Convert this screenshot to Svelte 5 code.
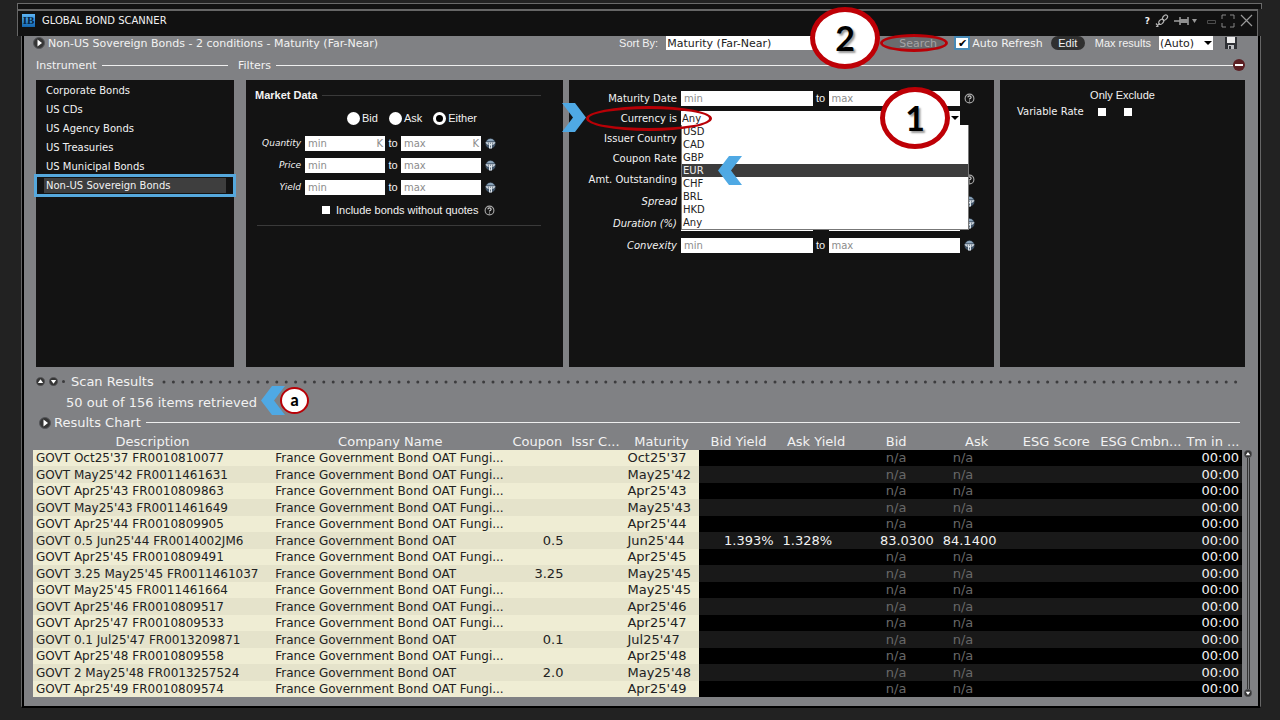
<script lang="ts">
  const instruments = [
    'Corporate Bonds',
    'US CDs',
    'US Agency Bonds',
    'US Treasuries',
    'US Municipal Bonds',
    'Non-US Sovereign Bonds',
  ];
  let instrument = $state('Non-US Sovereign Bonds');

  let side = $state('Either');
  const marketFields = [
    { label: 'Quantity', unit: 'K' },
    { label: 'Price', unit: '' },
    { label: 'Yield', unit: '' },
  ];

  const bondFields = [
    { label: 'Maturity Date', kind: 'range', icon: 'help' },
    { label: 'Currency is', kind: 'currency', icon: '' },
    { label: 'Issuer Country', kind: 'range', icon: '' },
    { label: 'Coupon Rate', kind: 'range', icon: '' },
    { label: 'Amt. Outstanding', kind: 'range', icon: 'help' },
    { label: 'Spread', kind: 'range', icon: 'globe', italic: true },
    { label: 'Duration (%)', kind: 'range', icon: 'globe', italic: true },
    { label: 'Convexity', kind: 'range', icon: 'globe', italic: true },
  ];

  const currencies = ['USD', 'CAD', 'GBP', 'EUR', 'CHF', 'BRL', 'HKD', 'Any'];
  let currency = $state('Any');
  let highlighted = $state('EUR');

  const columns = ['Description', 'Company Name', 'Coupon', 'Issr C...', 'Maturity', 'Bid Yield', 'Ask Yield', 'Bid', 'Ask', 'ESG Score', 'ESG Cmbn...', 'Tm in ...'];
  const widths = [239, 236, 58, 58, 74, 80, 75, 85, 76, 83, 86, 58];

  const long = 'France Government Bond OAT Fungi...';
  const short = 'France Government Bond OAT';
  const bonds = [
    { id: 'FR0010810077', company: long, coupon: '', maturity: "Oct25'37" },
    { id: 'FR0011461631', company: long, coupon: '', maturity: "May25'42" },
    { id: 'FR0010809863', company: long, coupon: '', maturity: "Apr25'43" },
    { id: 'FR0011461649', company: long, coupon: '', maturity: "May25'43" },
    { id: 'FR0010809905', company: long, coupon: '', maturity: "Apr25'44" },
    { id: 'FR0014002JM6', company: short, coupon: '0.5', maturity: "Jun25'44", bidYield: '1.393%', askYield: '1.328%', bid: '83.0300', ask: '84.1400' },
    { id: 'FR0010809491', company: long, coupon: '', maturity: "Apr25'45" },
    { id: 'FR0011461037', company: short, coupon: '3.25', maturity: "May25'45" },
    { id: 'FR0011461664', company: long, coupon: '', maturity: "May25'45" },
    { id: 'FR0010809517', company: long, coupon: '', maturity: "Apr25'46" },
    { id: 'FR0010809533', company: long, coupon: '', maturity: "Apr25'47" },
    { id: 'FR0013209871', company: short, coupon: '0.1', maturity: "Jul25'47" },
    { id: 'FR0010809558', company: long, coupon: '', maturity: "Apr25'48" },
    { id: 'FR0013257524', company: short, coupon: '2.0', maturity: "May25'48" },
    { id: 'FR0010809574', company: long, coupon: '', maturity: "Apr25'49" },
  ];

  function describe(bond: { id: string; coupon: string; maturity: string }) {
    const rate = bond.coupon === '2.0' ? '2' : bond.coupon;
    return ['GOVT', rate, bond.maturity, bond.id].filter(Boolean).join(' ');
  }
</script>

{#snippet globe()}
  <svg class="mark" viewBox="0 0 11 11" aria-hidden="true">
    <circle cx="5.500" cy="5.500" r="5" fill="#43566a" />
    <path d="M1.500 3.200Q5.500-1.500 9.500 3.200Z" fill="#8ba3b8" />
    <path d="M.4 4.200h10.200L8.800 6.400H7v4H4v-4H2.200Z" fill="#dde4ea" />
    <path d="M2.800 5.200h1.200M5 5.200h1M7 5.200h1.200M5.500 7.500v2" stroke="#3a4a5a" stroke-width=".8" />
  </svg>
{/snippet}

{#snippet help()}
  <svg class="mark" viewBox="0 0 10 10" aria-hidden="true">
    <circle cx="5" cy="5" r="4" fill="none" stroke="#aaa" />
    <path d="M3.500 4Q3.600 2.600 5 2.600T6.500 4Q6.400 4.800 5 5.500V6M5 6.800v.9" fill="none" stroke="#ccc" />
  </svg>
{/snippet}

{#snippet disc(d: string)}
  <svg class="disc" viewBox="0 0 12 12" aria-hidden="true">
    <circle cx="6" cy="6" r="5.500" fill="#353535" stroke="#55565a" />
    <path {d} fill="#fff" />
  </svg>
{/snippet}

{#snippet chevron(d: string)}
  <svg viewBox="0 0 24 29" width="24" height="29" aria-hidden="true"><path {d} fill="#4fa9e4" /></svg>
{/snippet}

<main class="desktop">
  <div class="back-window"></div>

  <header class="titlebar">
    <span class="logo">IB</span>
    <h1>GLOBAL BOND SCANNER</h1>
    <button class="help-btn" aria-label="Help">?</button>
    <button aria-label="Link">
      <svg width="14" height="14" viewBox="0 0 14 14" fill="none" stroke="#b4b4b4" stroke-width="1.200">
        <ellipse cx="10" cy="3.600" rx="3" ry="2" transform="rotate(-48 10 3.600)" />
        <ellipse cx="6.200" cy="7.800" rx="3" ry="2" transform="rotate(-48 6.200 7.800)" />
        <path d="M5 9.500 1 12.500M1 9.500 3.500 12.500" />
      </svg>
    </button>
    <button class="pin" aria-label="Pin">
      <svg width="24" height="12" viewBox="0 0 24 12">
        <path d="M0 6h6M6 2v8M8 4v4M14 2v8" stroke="#a0a0a0" stroke-width="1.500" fill="none" />
        <path d="M6 4h8v4H6Z" fill="#909090" />
        <path d="M18 4h5l-2.500 4Z" fill="#999" />
      </svg>
    </button>
    <button aria-label="Minimize">
      <svg width="9" height="12" viewBox="0 0 9 12"><path d="M.5 5.500h8v3h-8Z" fill="none" stroke="#4c4c4c" /></svg>
    </button>
    <button aria-label="Maximize">
      <svg width="14" height="14" viewBox="0 0 14 14"><path d="M1 5V1h4M9 1h4v4M13 9v4H9M5 13H1V9" fill="none" stroke="#888" /></svg>
    </button>
    <button aria-label="Close">
      <svg width="13" height="13" viewBox="0 0 13 13"><path d="M1 1 12 12M12 1 1 12" stroke="#999" stroke-width="1.200" /></svg>
    </button>
  </header>

  <div class="window">
    <div class="toolbar">
      <button aria-label="Expand scan">{@render disc('M4.500 2.500v7L9 6Z')}</button>
      <span class="summary">Non-US Sovereign Bonds - 2 conditions - Maturity (Far-Near)</span>
      <label class="arial" for="sort">Sort By:</label>
      <span class="picker sort">
        <select id="sort"><option>Maturity (Far-Near)</option></select>
      </span>
      <span class="search-wrap">
        <button class="search">Search</button>
        <span class="ring search-ring"></span>
        <span class="badge badge-two">2</span>
      </span>
      <label class="auto"><input type="checkbox" checked />Auto Refresh</label>
      <button class="edit">Edit</button>
      <label class="arial max" for="max">Max results</label>
      <span class="picker max-pick">
        <select id="max"><option>(Auto)</option></select>
      </span>
      <button class="save" aria-label="Save">
        <svg width="14" height="14" viewBox="0 0 14 14">
          <path d="M1 1h12v12H1Z" fill="#303236" />
          <path d="M3 1h8v6H3Z" fill="#eee" />
          <path d="M4 9h6v4H4Z" fill="#bfc1c4" />
          <path d="M5 10h2v3H5Z" fill="#303236" />
        </svg>
      </button>
    </div>

    <div class="heads">
      <h2 class="rule-head inst-head">Instrument</h2>
      <h2 class="rule-head filter-head">Filters</h2>
      <button class="collapse" aria-label="Collapse filters">
        <svg width="12" height="12" viewBox="0 0 12 12">
          <circle cx="6" cy="6" r="6" fill="#5c2024" /><path d="M2 6h8" stroke="#fff" stroke-width="2" />
        </svg>
      </button>
    </div>

    <div class="panels">
      <div class="panel list">
        {#each instruments as name}
          <button class:selected={name === instrument} onclick={() => (instrument = name)}>
            <span>{name}</span>
          </button>
        {/each}
      </div>

      <section class="panel market">
        <h3>Market Data</h3>
        <div class="sides">
          {#each ['Bid', 'Ask', 'Either'] as option}
            <label><input type="radio" name="side" value={option} bind:group={side} />{option}</label>
          {/each}
        </div>
        {#each marketFields as field}
          <div class="field">
            <label for={field.label}>{field.label}</label>
            <div class="range">
              <span class="box"><input id={field.label} placeholder="min" />{#if field.unit}<i>{field.unit}</i>{/if}</span>
              <span class="to">to</span>
              <span class="box"><input aria-label="{field.label} max" placeholder="max" />{#if field.unit}<i>{field.unit}</i>{/if}</span>
            </div>
            {@render globe()}
          </div>
        {/each}
        <div class="quotes">
          <label><input type="checkbox" />Include bonds without quotes</label>
          {@render help()}
        </div>
        <hr />
      </section>

      <section class="panel bond">
        {#each bondFields as field, i}
          <div class="field">
            <label class:italic={field.italic} for="bond-{i}">{field.label}</label>
            {#if field.kind === 'currency'}
              <div class="currency">
                <span class="picker">
                  <select id="bond-{i}" bind:value={currency}>
                    {#each currencies as code}<option>{code}</option>{/each}
                  </select>
                </span>
                <div class="menu">
                  {#each currencies as code}
                    <button
                      class:active={code === highlighted}
                      onmouseenter={() => (highlighted = code)}
                      onclick={() => (currency = code)}
                    >{code}</button>
                  {/each}
                  <span class="pointer menu-pointer">{@render chevron('M24 0H11L0 14.500 11 29H24L13 14.500Z')}</span>
                </div>
                <span class="pointer field-pointer">{@render chevron('M0 0H13L24 14.500 13 29H0L11 14.500Z')}</span>
                <span class="ring currency-ring"></span>
                <span class="badge badge-one">1</span>
              </div>
            {:else}
              <div class="range">
                <span class="box"><input id="bond-{i}" placeholder="min" /></span>
                <span class="to">to</span>
                <span class="box"><input aria-label="{field.label} max" placeholder="max" /></span>
              </div>
            {/if}
            {#if field.icon === 'help'}{@render help()}{:else if field.icon === 'globe'}{@render globe()}{/if}
          </div>
        {/each}
      </section>

      <section class="panel exclude">
        <h3>Only Exclude</h3>
        <div class="exclude-row">
          <span>Variable Rate</span>
          <input type="checkbox" aria-label="Only variable rate" />
          <input type="checkbox" aria-label="Exclude variable rate" />
        </div>
      </section>
    </div>

    <div class="divider">
      <button aria-label="Move up">{@render disc('M2.500 8h7L6 3Z')}</button>
      <button aria-label="Move down">{@render disc('M2.500 4h7L6 9Z')}</button>
      <span class="dot"></span>
      <h2>Scan Results</h2>
      <svg class="dots" height="4" aria-hidden="true">
        <line x1="2" y1="2" x2="100%" y2="2" stroke="#3c3c3e" stroke-width="3" stroke-linecap="round" stroke-dasharray="0 9.400" />
      </svg>
    </div>

    <div class="count">
      <span class="retrieved">50 out of 156 items retrieved</span>
      <span class="callout">{@render chevron('M24 0H11L0 14.500 11 29H24L13 14.500Z')}<span class="note">a</span></span>
    </div>

    <div class="chart">
      <button aria-label="Expand chart">{@render disc('M4.500 2.500v7L9 6Z')}</button>
      <h2 class="rule-head">Results Chart</h2>
    </div>

    <div class="results">
      <table>
        <colgroup>
          {#each widths as w}<col style="width: {(w / 1208) * 100}%" />{/each}
        </colgroup>
        <thead>
          <tr>{#each columns as name}<th>{name}</th>{/each}</tr>
        </thead>
        <tbody>
          {#each bonds as bond}
            <tr>
              <td class="info small">{describe(bond)}</td>
              <td class="info small">{bond.company}</td>
              <td class="info num">{bond.coupon}</td>
              <td class="info"></td>
              <td class="info">{bond.maturity}</td>
              <td class="num yield">{bond.bidYield ?? ''}</td>
              <td class="ask-yield">{bond.askYield ?? ''}</td>
              <td class={bond.bid ? 'num yield' : 'na'}>{bond.bid ?? 'n/a'}</td>
              <td class={bond.ask ? 'ask-yield' : 'na na-ask'}>{bond.ask ?? 'n/a'}</td>
              <td></td>
              <td></td>
              <td class="num">00:00</td>
            </tr>
          {/each}
        </tbody>
      </table>
      <div class="scroll">
        <button aria-label="Scroll up">{@render disc('M2.500 8h7L6 3Z')}</button>
        <span class="track"></span>
        <button aria-label="Scroll down">{@render disc('M2.500 4h7L6 9Z')}</button>
      </div>
    </div>
  </div>
</main>

<style>
  :global(body) {
    background: #222;
  }

  .desktop {
    box-sizing: border-box;
    min-height: 100vh;
    padding: 3px 18px 12px 17px;
    background: #222;
    color: #f2f2f2;
    font-family: "DejaVu Sans", Verdana, sans-serif;
    font-size: 10px;
  }

  .desktop * {
    box-sizing: border-box;
  }

  h1, h2, h3 {
    margin: 0;
    font-size: inherit;
    font-weight: normal;
  }

  button {
    display: flex;
    align-items: center;
    padding: 0;
    border: none;
    background: none;
    color: inherit;
    font: inherit;
    cursor: pointer;
  }

  svg {
    display: block;
    flex: none;
  }

  .disc {
    width: 12px;
    height: 12px;
  }

  .mark {
    width: 11px;
    height: 11px;
  }

  .back-window {
    height: 6px;
    border: 1px solid #6a6a6a;
    border-bottom: none;
    background: #111;
  }

  .titlebar {
    display: flex;
    align-items: center;
    gap: 5px;
    height: 27px;
    margin-right: 4px;
    padding: 0 4px 6px 4px;
    border: 1px solid #666;
    border-top-width: 2px;
    border-bottom: none;
    background: #111;
  }

  .logo {
    width: 13px;
    height: 13px;
    background: linear-gradient(#5cb4f4, #1266b0);
    color: #06243f;
    font: bold 11px/13px "Liberation Serif", serif;
    text-align: center;
  }

  h1 {
    flex: 1;
    padding-left: 2px;
  }

  .help-btn {
    font-weight: bold;
    font-size: 9px;
  }

  .pin {
    margin-right: 4px;
  }

  .window {
    margin: 0 1px 0 4px;
    border: 1px solid #666;
    border-top: none;
    border-bottom: 2px solid #000;
    box-shadow: inset 2px 0 #000, inset -2px 0 #000;
    background: #808184;
    padding: 0 3px 9px;
  }

  .toolbar {
    display: flex;
    align-items: center;
    height: 14px;
    padding: 0 19px 0 8px;
    font-size: 11px;
    white-space: nowrap;
  }

  .summary {
    flex: 1;
    padding-left: 3px;
  }

  .arial {
    font: 11px "Liberation Sans", Arial, sans-serif;
  }

  .picker {
    display: grid;
    align-items: center;
    background: #fff;
  }

  .picker::after {
    content: "";
    grid-area: 1 / 1;
    justify-self: end;
    margin-right: 1px;
    border: 4px solid transparent;
    border-top-color: #000;
    border-bottom: none;
    pointer-events: none;
  }

  select {
    grid-area: 1 / 1;
    width: 100%;
    height: 14px;
    padding: 0 1px;
    appearance: none;
    border: none;
    border-radius: 0;
    background: none;
    color: #222;
    font: inherit;
  }

  .sort {
    width: 190px;
    margin-left: 8px;
  }

  .search-wrap {
    position: relative;
    width: 60px;
    margin: 0 10px 0 28px;
  }

  .search {
    justify-content: center;
    width: 60px;
    height: 14px;
    padding-left: 8px;
    border-radius: 7px;
    background: #6a6b6e;
    color: #a4a4a6;
  }

  .ring {
    position: absolute;
    border: 3px solid #b80006;
    border-radius: 50%;
    pointer-events: none;
  }

  .search-ring {
    top: -2px;
    left: -4px;
    width: 68px;
    height: 18px;
  }

  .badge {
    position: absolute;
    width: 70px;
    height: 62px;
    border: 5px solid #be0006;
    border-radius: 50%;
    background: #fff;
    color: #000;
    font: 700 34px/52px Lato, sans-serif;
    text-align: center;
    text-shadow: 2px 2px 2px #999;
    pointer-events: none;
  }

  .badge-two {
    top: -29px;
    left: -74px;
  }

  .auto {
    display: flex;
    align-items: center;
    gap: 2px;
  }

  .auto input {
    display: grid;
    place-items: center;
    width: 16px;
    height: 14px;
    margin: 0;
    appearance: none;
    border: 2px solid #4789b5;
    background: #fff;
  }

  .auto input:checked::before {
    content: "✔";
    color: #000;
    font-size: 11px;
    line-height: 8px;
  }

  .edit {
    justify-content: center;
    width: 34px;
    height: 14px;
    margin: 0 10px 0 8px;
    border-radius: 7px;
    background: #303030;
    font: 11px "Liberation Sans", Arial, sans-serif;
  }

  .max-pick {
    width: 54px;
    margin: 0 11px 0 8px;
  }

  .heads {
    display: flex;
    align-items: center;
    height: 30px;
    padding: 0 12px 0 11px;
    font-size: 11px;
  }

  .rule-head {
    display: flex;
    align-items: center;
    gap: 5px;
  }

  .rule-head::after {
    content: "";
    flex: 1;
    height: 1px;
    background: #eee;
  }

  .inst-head {
    width: 192px;
    margin-right: 10px;
  }

  .filter-head {
    flex: 1;
  }

  .panels {
    display: grid;
    grid-template-columns: 204fr 317fr 425fr 245fr;
    gap: 6px;
    min-height: 287px;
    padding: 0 12px 0 11px;
  }

  .panel {
    min-width: 0;
    background: #131313;
  }

  .list {
    margin-right: 6px;
    padding-top: 1px;
  }

  .list button {
    width: 100%;
    height: 19px;
    padding: 0 8px;
  }

  .list span {
    flex: 1;
    padding-left: 2px;
    line-height: 15px;
    text-align: left;
  }

  .list .selected {
    outline: 3px solid #55a8dc;
    outline-offset: -1px;
  }

  .list .selected span {
    background: #3e3e3e;
  }

  h3 {
    font: 11px/15px "Liberation Sans", Arial, sans-serif;
  }

  .market {
    padding: 8px 22px 0 0;
  }

  .market h3 {
    display: flex;
    align-items: center;
    gap: 5px;
    margin-left: 9px;
    font-weight: bold;
  }

  .market h3::after {
    content: "";
    flex: 1;
    height: 1px;
    background: #3a3a3a;
  }

  .sides {
    display: flex;
    gap: 11px;
    height: 20px;
    margin: 5px 0 4px 101px;
    font: 11px "Liberation Sans", Arial, sans-serif;
  }

  .sides label {
    display: flex;
    align-items: center;
    gap: 2px;
  }

  input[type="radio"] {
    width: 13px;
    height: 13px;
    margin: 0;
    appearance: none;
    border-radius: 50%;
    background: #fff;
  }

  input[type="radio"]:checked {
    border: 3px solid #fff;
    background: #000;
  }

  .field {
    display: grid;
    align-items: center;
    grid-template-columns: 108px 1fr 11px;
    column-gap: 4px;
    height: 22px;
  }

  .bond .field:nth-child(-n + 4) {
    height: 20px;
  }

  .market .field {
    grid-template-columns: 55px 1fr 11px;
    margin-right: 45px;
  }

  .field label {
    text-align: right;
  }

  .market .field label,
  .field .italic {
    font-size: 9px;
    font-style: italic;
  }

  .field .italic {
    font-size: 10px;
  }

  .range {
    display: grid;
    grid-template-columns: 1fr 16px 1fr;
    align-items: center;
  }

  .box {
    display: flex;
    align-items: center;
    height: 15px;
    padding: 0 2px;
    background: #fff;
    color: #8c8c8c;
  }

  .box input {
    flex: 1;
    width: 0;
    min-width: 0;
    height: 15px;
    padding: 0 1px;
    border: none;
    outline: none;
    background: none;
    font: inherit;
  }

  .box input::placeholder {
    color: #8c8c8c;
  }

  .box i {
    font-style: normal;
  }

  .to {
    font: 11px "Liberation Sans", Arial, sans-serif;
    text-align: center;
  }

  .quotes {
    display: flex;
    align-items: center;
    gap: 5px;
    height: 20px;
    margin: 2px 0 5px 76px;
    font: 11px "Liberation Sans", Arial, sans-serif;
  }

  .quotes label {
    display: flex;
    align-items: center;
    gap: 6px;
  }

  .quotes input,
  .exclude input {
    width: 8px;
    height: 8px;
    margin: 0;
    appearance: none;
    background: #fff;
  }

  .quotes input:checked,
  .exclude input:checked {
    border: 2px solid #fff;
    background: #000;
  }

  hr {
    height: 1px;
    margin: 0 0 0 11px;
    border: none;
    background: #3a3a3a;
  }

  .bond {
    padding: 8px 19px 0 0;
  }

  .currency {
    position: relative;
  }

  .menu {
    position: absolute;
    z-index: 1;
    top: 14px;
    left: 0;
    right: -9px;
    border: 1px solid #777;
    border-top: none;
    background: #fff;
    color: #222;
  }

  .menu button {
    width: 100%;
    height: 13px;
    padding-left: 1px;
  }

  .menu .active {
    background: #3c3c3c;
    color: #eee;
  }

  .pointer {
    position: absolute;
    pointer-events: none;
  }

  .menu-pointer {
    top: 31px;
    left: 36px;
  }

  .field-pointer {
    top: -8px;
    left: -119px;
  }

  .currency-ring {
    z-index: 2;
    top: -5px;
    left: -95px;
    width: 126px;
    height: 25px;
  }

  .badge-one {
    z-index: 2;
    top: -24px;
    right: 10px;
  }

  .exclude {
    padding-top: 8px;
  }

  .exclude h3 {
    text-align: center;
  }

  .exclude-row {
    display: flex;
    align-items: center;
    height: 17px;
    padding-left: 17px;
  }

  .exclude-row input {
    margin-left: 14px;
  }

  .exclude-row input + input {
    margin-left: 18px;
  }

  .divider {
    display: flex;
    align-items: center;
    height: 23px;
    margin-top: 3px;
    padding: 0 15px 0 11px;
    font-size: 13px;
  }

  .divider .disc {
    width: 9px;
    height: 9px;
    margin-right: 4px;
  }

  .dot {
    width: 3px;
    height: 3px;
    margin-right: 6px;
    border-radius: 50%;
    background: #3c3c3e;
  }

  .dots {
    flex: 1;
    margin-left: 8px;
    min-width: 0;
  }

  .count {
    display: flex;
    align-items: center;
    height: 18px;
    padding-left: 41px;
    font-size: 13px;
  }

  .callout {
    display: flex;
    align-items: center;
    margin: 0 0 4px 4px;
  }

  .note {
    width: 29px;
    height: 27px;
    margin-left: -5px;
    border: 2px solid #b80006;
    border-radius: 50%;
    background: #fff;
    color: #000;
    font: 900 16px/22px Lato, sans-serif;
    text-align: center;
  }

  .chart {
    display: flex;
    align-items: center;
    gap: 3px;
    height: 23px;
    padding: 0 17px 0 14px;
    font-size: 13px;
  }

  .chart h2 {
    flex: 1;
  }

  .results {
    display: flex;
    padding: 0 5px 0 8px;
  }

  table {
    flex: 1;
    width: 0;
    table-layout: fixed;
    border-collapse: collapse;
    font-size: 13px;
    line-height: 16px;
  }

  th {
    height: 16px;
    padding: 0;
    font-weight: normal;
    white-space: nowrap;
  }

  td {
    height: 16px;
    padding: 0 3px;
    background: #000;
    white-space: nowrap;
  }

  tr:nth-child(even) td {
    height: 17px;
    background: #191919;
  }

  tr .info {
    background: #efedd4;
    color: #222;
  }

  tr:nth-child(even) .info {
    background: #e5e3cb;
  }

  .small {
    font-size: 12px;
  }

  .num {
    text-align: right;
  }

  .yield {
    padding-right: 5px;
  }

  .ask-yield {
    padding-left: 4px;
  }

  .na {
    color: #686868;
    text-align: center;
  }

  .na-ask {
    padding-left: 14px;
    text-align: left;
  }

  .scroll {
    display: flex;
    flex-direction: column;
    align-items: center;
    width: 8px;
    margin: 16px 0 0 2px;
  }

  .scroll .disc {
    width: 8px;
    height: 8px;
  }

  .track {
    flex: 1;
    width: 3px;
    border: 1px solid #333;
    border-width: 0 1px;
  }
</style>
